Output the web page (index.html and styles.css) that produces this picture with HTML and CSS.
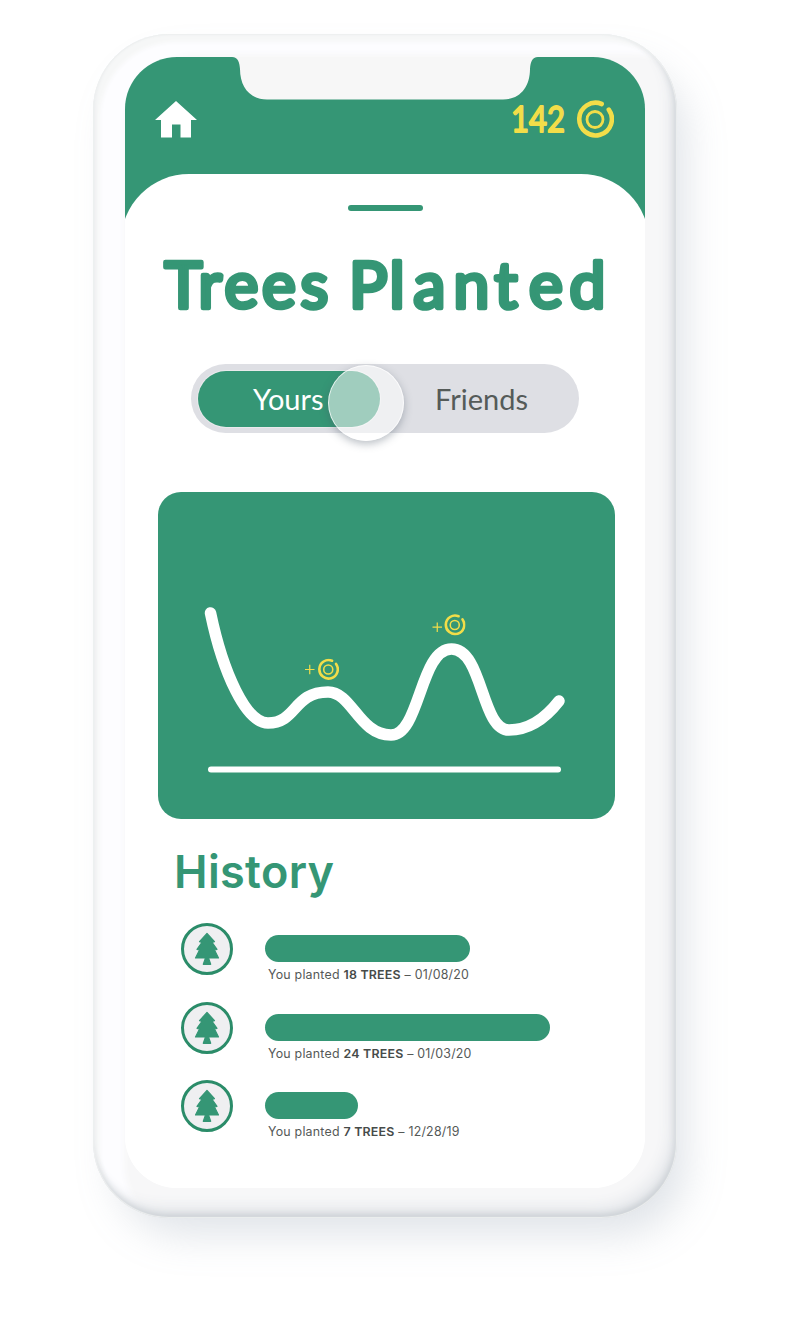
FILE: index.html
```html
<!DOCTYPE html>
<html lang="en">
<head>
<meta charset="utf-8">
<title>Trees Planted</title>
<link rel="stylesheet" href="styles.css">
</head>
<body>
<svg class="defs" width="0" height="0" aria-hidden="true">
  <symbol id="coin" viewBox="0 0 38 38">
    <path d="M25.7 4A16.3 16.3 0 1 0 32.8 9.6" fill="none" stroke="currentColor" stroke-width="4.6" stroke-linecap="round"/>
    <circle cx="19" cy="19.500" r="8" fill="none" stroke="currentColor" stroke-width="2.800"/>
  </symbol>
  <symbol id="tree" viewBox="0 0 26 34">
    <path d="M13 1.500L20.500 9.600L18 10.300L23 17.300L20.500 18L24.500 26H14.500L16.700 32.300H9.300L11.500 26H1.500L5.500 18L3 17.300L8 10.300L5.500 9.600Z" fill="currentColor" stroke="currentColor" stroke-width="1.200" stroke-linejoin="round"/>
  </symbol>
</svg>
<main class="phone">
  <div class="screen">
    <svg class="notch" width="306" height="43" viewBox="0 0 306 43"><path d="M0 0C6 0 7.500 5 8 12C8 30 18 42.500 35 42.500H271C288 42.500 298 30 298 12C298.500 5 300 0 306 0Z"/></svg>
    <header class="topbar">
      <svg class="home" width="42" height="37" viewBox="0 0 42 37"><path d="M21 0L42 19H36V36.500H25.500V23.500H17V36.500H6V19H0Z"/></svg>
      <div class="balance">
        <svg class="amount" width="68" height="56"><text x="3" y="39.500" textLength="54" lengthAdjust="spacingAndGlyphs">142</text></svg>
        <svg class="coin"><use href="#coin"/></svg>
      </div>
    </header>
    <section class="sheet">
      <div class="handle"></div>
      <h1 class="title">
        <svg width="460" height="80"><text y="62.500"><tspan x="6.500 40.500 66.500 104 142.500">Trees</tspan> <tspan x="191 231.500 255.500 295.500 336.500 371 411.500">Planted</tspan></text></svg>
      </h1>
      <div class="switch">
        <div class="option active"><span class="label">Yours</span></div>
        <div class="option"><span class="label">Friends</span></div>
        <div class="knob"></div>
      </div>
      <svg class="chart" width="457" height="327" viewBox="0 0 457 327">
        <path class="curve" d="M52.500 121C65 181 88 231 110 231C139 231 135 200 170 200C194 200 201 243 233 243C262 243 262 157 293.500 157C325 157 323 238 351 238C370 238 387 227 401 209"/>
        <path class="axis" d="M53 277.500H400"/>
        <g class="bonus">
          <path d="M147 177.500H156.500M151.750 172.800V182.200M274.500 135.200H284M279.250 130.500V140"/>
          <use href="#coin" x="159.500" y="166.500" width="21.500" height="21.500"/>
          <use href="#coin" x="286" y="122" width="21.500" height="21.500"/>
        </g>
      </svg>
      <h2 class="history-title">History</h2>
      <ul class="history">
        <li class="entry">
          <span class="badge"><svg class="tree"><use href="#tree"/></svg></span>
          <div class="record"><div class="bar" style="width:204.5px"></div><p class="caption">You planted <b>18 TREES</b> – 01/08/20</p></div>
        </li>
        <li class="entry">
          <span class="badge"><svg class="tree"><use href="#tree"/></svg></span>
          <div class="record"><div class="bar" style="width:284.5px"></div><p class="caption">You planted <b>24 TREES</b> – 01/03/20</p></div>
        </li>
        <li class="entry">
          <span class="badge"><svg class="tree"><use href="#tree"/></svg></span>
          <div class="record"><div class="bar" style="width:92.5px"></div><p class="caption">You planted <b>7 TREES</b> – 12/28/19</p></div>
        </li>
      </ul>
    </section>
  </div>
</main>
</body>
</html>
```
FILE: styles.css
```css
* { box-sizing: border-box; }
body {
  margin: 0;
  height: 1333px;
  padding: 34px 0 0 93px;
  background: #fff;
  overflow: hidden;
  font-family: Inter, "Liberation Sans", sans-serif;
}
.defs { position: absolute; }
.phone {
  width: 584px;
  height: 1184px;
  padding: 23px 32px 30px;
  border-radius: 76px;
  background: #f7f7f8;
  box-shadow:
    16px 24px 40px -8px rgba(130, 145, 165, .26),
    inset 0 0 1px 1px #eef0f0,
    inset -2px -4px 7px #c9ced3,
    inset -9px -13px 12px #e9ebee,
    inset 7px 8px 4px #f6f7f7,
    inset 31px 20px 6px #fdfdff;
}
.screen {
  position: relative;
  width: 520px;
  height: 1131px;
  border-radius: 52px;
  background: linear-gradient(#359675 240px, #fff 240px);
  overflow: hidden;
}
.notch { position: absolute; left: 107px; top: 0; fill: #f7f7f7; }
.topbar {
  height: 117px;
  padding: 43px 31px 0 30px;
  display: flex;
  justify-content: space-between;
  align-items: flex-start;
}
.home { display: block; margin-top: 1px; fill: #fff; }
.balance { display: flex; color: #f2dd49; }
.amount {
  margin-top: -8px;
  overflow: visible;
  font: 400 36px Lato, sans-serif;
  fill: #f2dd49;
  stroke: #f2dd49;
  stroke-width: 1.800px;
  stroke-linejoin: round;
}
.coin { width: 38px; height: 38px; }
.sheet {
  height: 1014px;
  margin: 0 -4px;
  padding: 31px 38px 0 37px;
  border-radius: 68px 68px 0 0;
  background: #fff;
}
.handle { width: 75px; height: 6px; margin: 0 0 0 190px; border-radius: 3px; background: #359675; }
.title { margin: 34px 0 0; height: 80px; }
.title svg {
  display: block;
  font: 400 64px Lato, sans-serif;
  fill: #359675;
  stroke: #359675;
  stroke-width: 4.600px;
  stroke-linejoin: round;
}
.switch {
  position: relative;
  width: 388px;
  height: 69px;
  margin: 39px 0 0 33px;
  padding: 7px;
  display: flex;
  border-radius: 35px;
  background: #dedfe4;
}
.option {
  width: 182px;
  height: 56px;
  flex: none;
  padding-left: 55px;
  font: 400 29px/56px Lato, sans-serif;
  color: #555b59;
  white-space: nowrap;
}
.active { border-radius: 28px; background: #359675; color: #fff; box-shadow: 0 0 0 1px #e9eaec; }
.knob {
  position: absolute;
  left: 137px;
  top: 1px;
  width: 76px;
  height: 76px;
  border-radius: 50%;
  border: 1px solid rgba(255, 255, 255, .75);
  background: rgba(255, 255, 255, .53);
  box-shadow: 0 3px 9px rgba(70, 85, 100, .38);
}
.chart { display: block; margin-top: 59px; border-radius: 23px; background: #359675; }
.curve { fill: none; stroke: #fff; stroke-width: 11.500; stroke-linecap: round; }
.axis { stroke: #fff; stroke-width: 6; stroke-linecap: round; }
.bonus { color: #f2dd49; fill: none; stroke: #f2dd49; stroke-width: 1.200; }
.history-title {
  margin: 23px 0 0 16px;
  font: 600 45px/60px Inter, sans-serif;
  letter-spacing: .350px;
  color: #359675;
}
.history { list-style: none; margin: 21px 0 0 23px; padding: 0; }
.entry { display: flex; gap: 32px; height: 78.500px; }
.badge {
  width: 52px;
  height: 52px;
  border: 3px solid #2b8c69;
  border-radius: 50%;
  background: #efeff1;
  display: grid;
  place-items: center;
  color: #359675;
}
.tree { width: 26px; height: 34px; }
.record { padding-top: 12px; }
.bar { height: 27px; border-radius: 14px; background: #359675; }
.caption {
  margin: 5px 0 0 3px;
  font: 400 12.400px/16px Inter, sans-serif;
  letter-spacing: .220px;
  color: #555957;
  white-space: nowrap;
}
.caption b { font-weight: 600; color: #464b49; }
```
